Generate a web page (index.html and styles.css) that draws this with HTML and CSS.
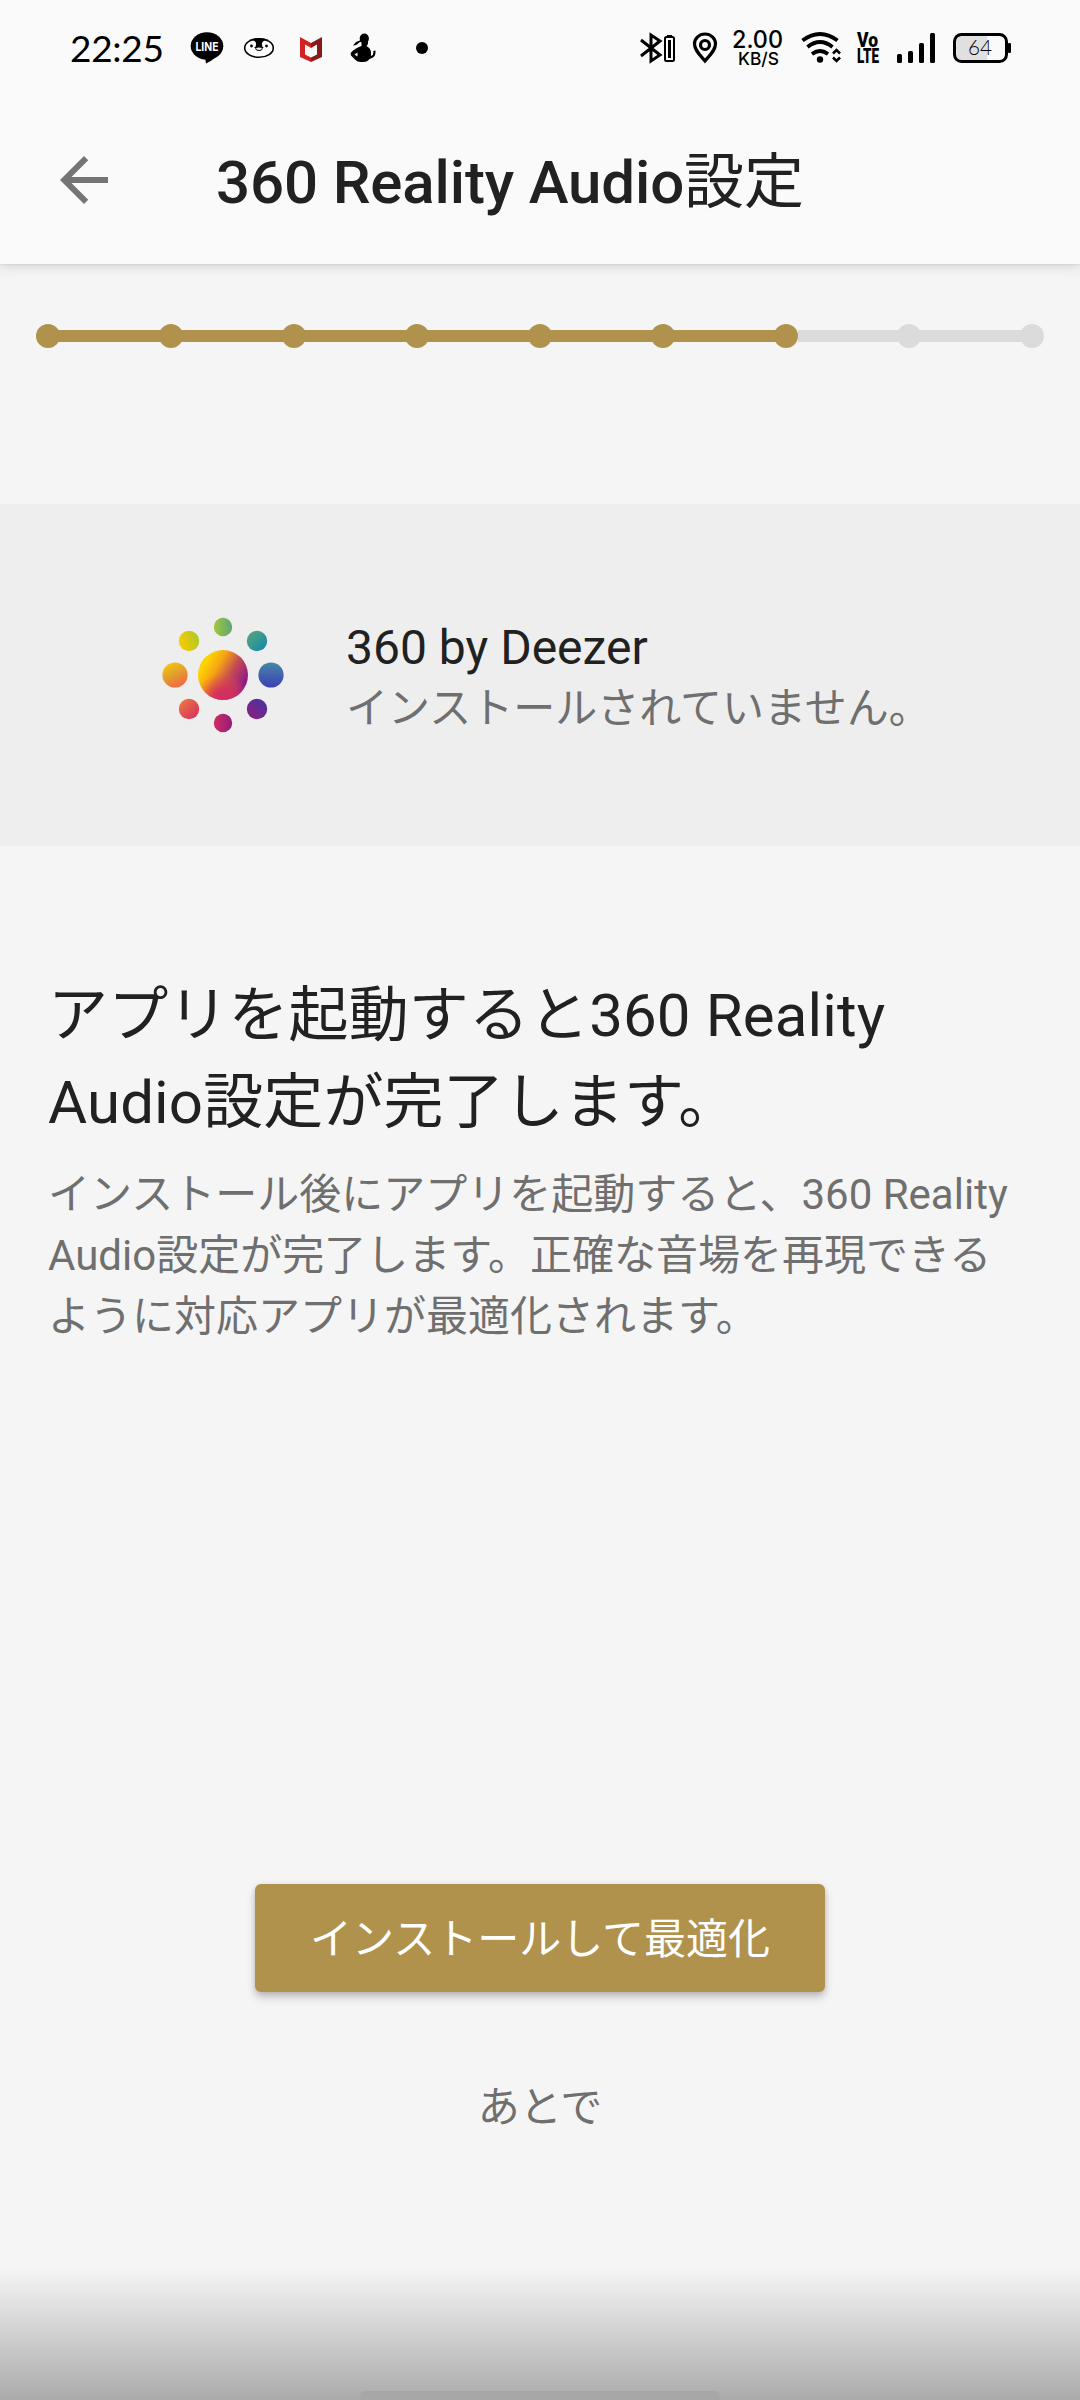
FILE: index.html
```html
<!DOCTYPE html>
<html lang="ja">
<head>
<meta charset="utf-8">
<title>360 Reality Audio設定</title>
<link rel="stylesheet" href="styles.css">
</head>
<body>
<div class="screen">
  <header class="top">
    <div class="status">
      <span class="clock">22:25</span>
      <svg class="notifications" width="242" height="80" viewBox="186 10 242 80">
        <ellipse cx="207" cy="46" rx="16.300" ry="13.800"/>
        <path d="M205 57l1 6.500q9-4 12-10z"/>
        <text class="line-label" x="207" y="50.500" textLength="23" lengthAdjust="spacingAndGlyphs">LINE</text>
        <ellipse cx="259" cy="48" rx="14.300" ry="9.300" fill="#fff" stroke="#000" stroke-width="1.600"/>
        <path d="M249 40q10-4 20 0-8 0-7 5 0 2 2 3h-10q2-1 2-3 1-5-7-5z"/>
        <circle cx="251.500" cy="46" r="1.400"/><circle cx="266.500" cy="46" r="1.400"/>
        <ellipse cx="259" cy="48.700" rx="3.300" ry="1.800" fill="#eee" stroke="#000" stroke-width="1"/>
        <path fill="#d22222" d="M300 37l11 6v5l-6-3.500v10l6 3v4.500l-11-5z"/>
        <path fill="#861b1b" d="M322 37l-11 6v5l6-3.500v10l-6 3v4.500l11-5z"/>
        <ellipse cx="364.300" cy="38.500" rx="4.600" ry="4.900"/>
        <path d="M361 40l-5 2-3 3.500q4 0 6-3l3-1zM361.500 41h6.500v3l-1.500 2q4 2 4.500 6v4q2.500-1 2.500-4l-.5-1 2.500-.5v2q0 5-6 6.500-2 3-6 3h-3q-3 0-5-2l-4.500-4.500q-.8-1.500 0-3 4-4.500 10.500-6.500z"/>
        <path class="gap" d="M354.500 54.500l3-2v4z"/>
        <circle cx="422" cy="48" r="6"/>
      </svg>
      <svg class="system" width="392" height="80" viewBox="630 10 392 80">
        <path class="stroke" stroke-width="3" d="M641 40l19 15-9 6V35l9 6-19 15"/>
        <rect class="stroke" x="665" y="37" width="9" height="24" rx="1.500" stroke-width="2"/>
        <path d="M667 35h5v2h-5zM668 40h3v18h-3z"/>
        <path class="stroke" stroke-width="3.200" d="M705 61c-5-6-10.500-11-10.500-17a10.500 10 0 0 1 21 0c0 6-5.500 11-10.500 17z"/>
        <circle class="stroke" cx="705" cy="45" r="4.500" stroke-width="3.200"/>
        <text class="rate" x="732" y="47.500" textLength="51" lengthAdjust="spacingAndGlyphs">2.00</text>
        <text class="unit" x="738" y="64.500" textLength="41" lengthAdjust="spacingAndGlyphs">KB/S</text>
        <path class="stroke" stroke-width="3.800" d="M802.500 40.500q17.500-13 35 0M807.500 47q12.500-10 25 0M812 54q8-6 16 0"/>
        <circle cx="820" cy="59.500" r="3.200"/>
        <path class="stroke" stroke-width="2.600" d="M833 53.500l3.500-3.500 3.500 3.500M833 57.500l3.500 3.500 3.500-3.500"/>
        <text class="volte" x="857" y="47" textLength="21" lengthAdjust="spacingAndGlyphs">Vo</text>
        <text class="volte" x="857" y="62.700" textLength="22" lengthAdjust="spacingAndGlyphs">LTE</text>
        <rect x="897" y="54" width="5" height="9" rx="1.500"/>
        <rect x="908" y="51" width="5" height="12" rx="1.500"/>
        <rect x="919" y="43" width="5" height="20" rx="1.500"/>
        <rect x="930" y="33" width="5" height="30" rx="1.500"/>
        <path fill="#e0e0e0" d="M955 35h32v26h-32z"/>
        <rect class="stroke" x="954.500" y="34.500" width="52" height="27" rx="7" stroke-width="3"/>
        <rect x="1008" y="43" width="3" height="10" rx="1"/>
        <text class="charge" x="968" y="55" textLength="24" lengthAdjust="spacingAndGlyphs">64</text>
      </svg>
    </div>
    <div class="appbar">
      <svg class="back" viewBox="0 0 24 24"><path d="M20 11H7.830l5.590-5.590L12 4l-8 8 8 8 1.410-1.410L7.830 13H20v-2z"/></svg>
      <h1 class="title">360 Reality Audio<span class="title-ja">設定</span></h1>
    </div>
  </header>
  <main class="content">
    <div class="steps">
      <i class="step done"></i><i class="step done"></i><i class="step done"></i><i class="step done"></i><i class="step done"></i><i class="step done"></i><i class="step current"></i><i class="step"></i><i class="step"></i>
    </div>
    <section class="app">
      <svg class="logo" width="122" height="116" viewBox="162 617 122 116">
        <defs>
          <linearGradient id="top"><stop stop-color="#a3c63a"/><stop offset="1" stop-color="#5fa577"/></linearGradient>
          <linearGradient id="ne" x2="1" y2="1"><stop stop-color="#5ba777"/><stop offset="1" stop-color="#1187b0"/></linearGradient>
          <linearGradient id="e" x2="0" y2="1"><stop stop-color="#4787a7"/><stop offset="1" stop-color="#3b3fb4"/></linearGradient>
          <linearGradient id="se" x1="1" y1="0" x2="0" y2="1"><stop stop-color="#4035a5"/><stop offset="1" stop-color="#941d7b"/></linearGradient>
          <linearGradient id="s"><stop stop-color="#cf2d60"/><stop offset="1" stop-color="#941c7b"/></linearGradient>
          <linearGradient id="sw" x2="1" y2="1"><stop stop-color="#ed7d42"/><stop offset="1" stop-color="#d42b61"/></linearGradient>
          <linearGradient id="w" x2=".5" y2="1"><stop stop-color="#f8d207"/><stop offset=".55" stop-color="#e2a02b"/><stop offset="1" stop-color="#f16b43"/></linearGradient>
          <linearGradient id="nw" x1="0" y1=".6" x2="1" y2=".3"><stop stop-color="#fccb00"/><stop offset="1" stop-color="#adca25"/></linearGradient>
          <linearGradient id="core" x1=".1" y1=".15" x2=".95" y2=".65"><stop offset=".1" stop-color="#ffd200"/><stop offset=".35" stop-color="#f5a414"/><stop offset=".65" stop-color="#c44c52"/><stop offset="1" stop-color="#8f168b"/></linearGradient>
          <radialGradient id="coreLow" cx=".5" cy="1" r=".55"><stop stop-color="#d42b60"/><stop offset=".35" stop-color="#d72f5c" stop-opacity=".9"/><stop offset="1" stop-color="#e8503f" stop-opacity="0"/></radialGradient>
        </defs>
        <circle cx="223" cy="627" r="9.200" fill="url(#top)"/>
        <circle cx="257" cy="641" r="10.200" fill="url(#ne)"/>
        <circle cx="271" cy="675" r="12.600" fill="url(#e)"/>
        <circle cx="257" cy="709" r="10.200" fill="url(#se)"/>
        <circle cx="223" cy="723" r="9.200" fill="url(#s)"/>
        <circle cx="189" cy="709" r="10.200" fill="url(#sw)"/>
        <circle cx="175" cy="675" r="12.600" fill="url(#w)"/>
        <circle cx="189" cy="641" r="10.200" fill="url(#nw)"/>
        <circle cx="223" cy="675" r="25" fill="url(#core)"/>
        <circle cx="223" cy="675" r="25" fill="url(#coreLow)"/>
      </svg>
      <div class="app-text">
        <div class="app-name">360 by Deezer</div>
        <div class="app-state">インストールされていません。</div>
      </div>
    </section>
    <h2 class="heading">アプリを起動すると360 Reality<br>Audio設定が完了します。</h2>
    <p class="detail">インストール後にアプリを起動すると、360 Reality<br>Audio設定が完了します。正確な音場を再現できる<br>ように対応アプリが最適化されます。</p>
    <div class="actions">
      <button class="install">インストールして最適化</button>
      <button class="later">あとで</button>
    </div>
  </main>
  <footer class="navbar"><i class="pill"></i></footer>
</div>
</body>
</html>
```
FILE: styles.css
```css
* { box-sizing: border-box; }
body { margin: 0; background: #f5f5f5; }
.screen {
  width: 1080px;
  height: 2400px;
  display: flex;
  flex-direction: column;
  overflow: hidden;
  background: #f5f5f5;
  color: #212121;
  font-family: Roboto, "Noto Sans CJK JP", sans-serif;
}
.top {
  height: 264px;
  background: #fafafa;
  box-shadow: 0 3px 12px rgba(0, 0, 0, .13), 0 1px 2px rgba(0, 0, 0, .07);
}
.status {
  height: 96px;
  padding: 10px 58px 0 70px;
  display: flex;
}
.clock {
  width: 116px;
  font: 37px/76px Lato, sans-serif;
  letter-spacing: -.3px;
  color: #000;
}
.system { margin-left: auto; }
.stroke { fill: none; stroke: #000; }
.gap { fill: #fafafa; }
.line-label { font: 700 12px Inter, sans-serif; fill: #fff; text-anchor: middle; }
.rate { font: 500 24px Inter, sans-serif; }
.unit { font: 500 17.500px Inter, sans-serif; }
.volte { font: 900 19.500px Roboto, sans-serif; }
.charge { font: 300 21px Lato, sans-serif; fill: #000; }
.appbar {
  height: 168px;
  padding: 0 48px;
  display: flex;
  align-items: center;
}
.back { width: 72px; height: 72px; fill: #757575; }
.title {
  margin: 0 0 0 96px;
  padding-top: 6px;
  font-size: 60px;
  font-weight: 500;
  line-height: 84px;
  letter-spacing: -.13px;
  white-space: nowrap;
}
.title-ja { font-weight: 400; }
.steps {
  padding: 60px 36px 0;
  height: 240px;
  display: flex;
  justify-content: space-between;
  align-items: flex-start;
}
.step {
  position: relative;
  width: 24px;
  height: 24px;
  border-radius: 50%;
  background: #dbdbdb;
}
.step:not(:last-child)::after {
  content: "";
  position: absolute;
  left: 20px;
  top: 6px;
  width: 107px;
  height: 12px;
  background: #dbdbdb;
}
.step.current, .step.done, .step.done::after { background: #b0924c; }
.step.current::after { left: 24px; width: 103px; }
.step.done::after { z-index: 1; }
.app {
  height: 342px;
  padding-left: 162px;
  display: flex;
  align-items: center;
  background: #eee;
}
.app-text { margin-left: 62px; padding-top: 8px; }
.app-name { font-size: 48px; line-height: 60px; }
.app-state { font-size: 42px; line-height: 62px; color: #6f6f6f; }
.heading {
  margin: 126px 48px 0;
  font-size: 60px;
  font-weight: 400;
  line-height: 87px;
  letter-spacing: .13px;
  white-space: nowrap;
}
.detail {
  margin: 18px 48px 0;
  font-size: 42px;
  line-height: 61px;
  color: #6f6f6f;
  white-space: nowrap;
}
.actions {
  margin-top: 537px;
  display: flex;
  flex-direction: column;
  align-items: center;
  gap: 60px;
}
.install, .later {
  padding: 3px 0 0;
  border: 0;
  height: 108px;
  font: 400 42px/60px Roboto, "Noto Sans CJK JP", sans-serif;
}
.install {
  width: 570px;
  border-radius: 6px;
  background: #b0924c;
  color: #fff;
  box-shadow: 0 5px 8px rgba(0, 0, 0, .22), 0 1px 4px rgba(0, 0, 0, .1);
}
.later { padding-top: 4px; background: transparent; color: #6f6f6f; }
.content { height: 2004px; flex: none; }
.navbar {
  height: 132px;
  flex: none;
  display: flex;
  justify-content: center;
  align-items: flex-end;
  background: linear-gradient(#f5f5f5, #ababab);
}
.pill { width: 360px; height: 9px; border-radius: 5px 5px 0 0; background: #a7a7a7; }
```
